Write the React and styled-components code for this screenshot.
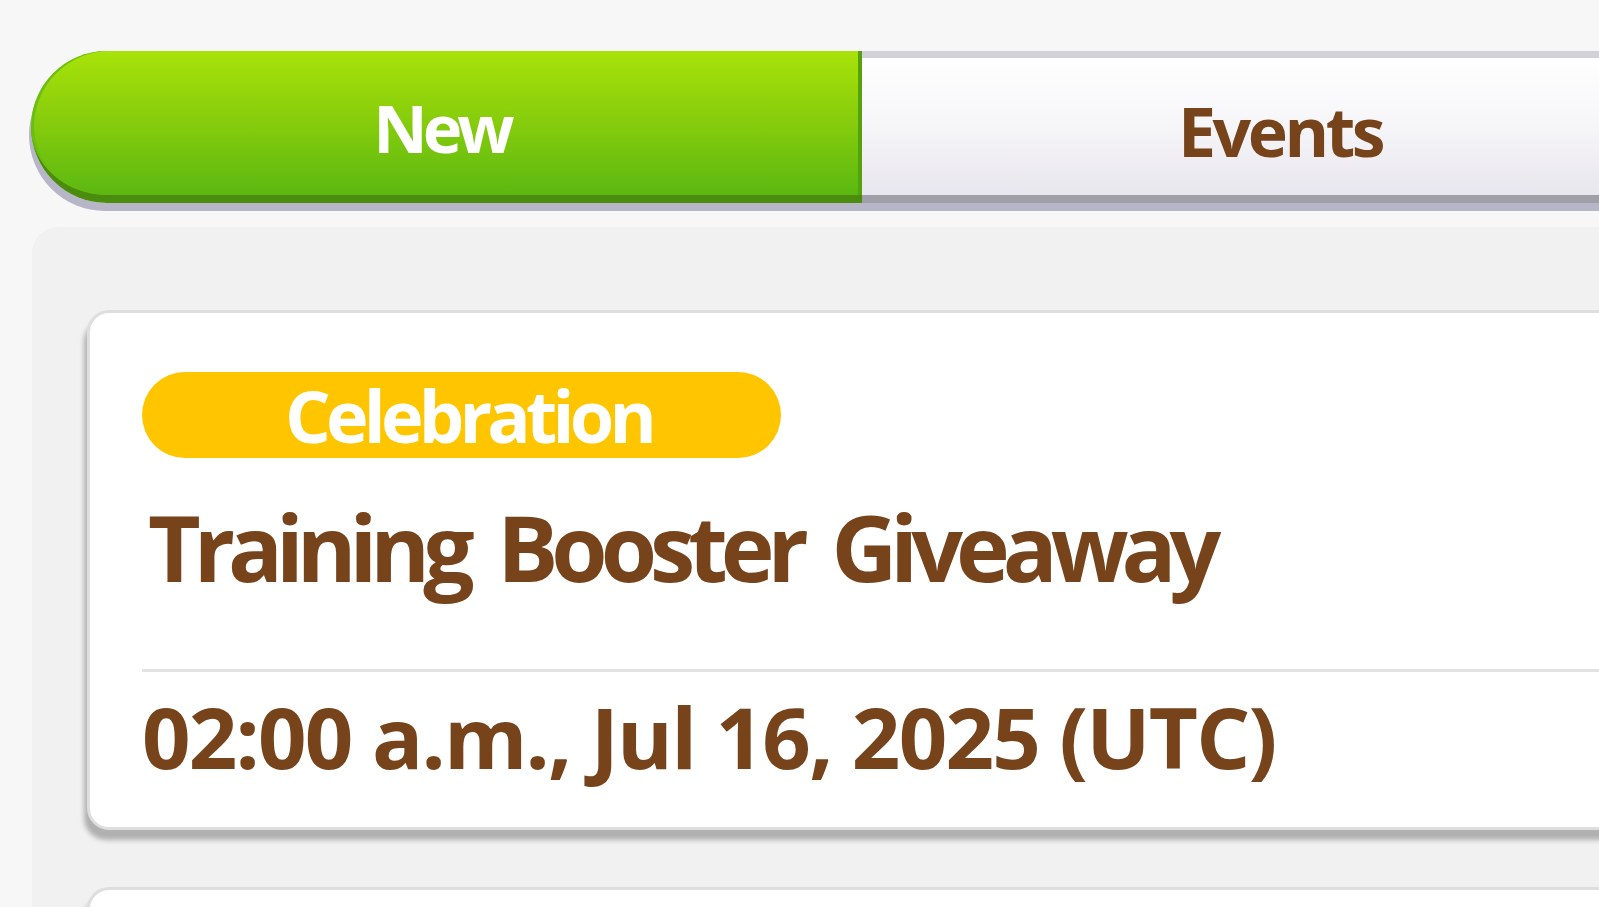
import React from "react";
import styled, { createGlobalStyle } from "styled-components";

const GlobalStyle = createGlobalStyle`
    html, body {
        margin: 0;
        padding: 0;
        background: #f7f7f7;
        overflow: hidden;
    }
    * {
        box-sizing: border-box;
    }
`;

const Page = styled.div`
    width: 1599px;
    height: 907px;
    overflow: hidden;
    padding: 51px 0 0 31px;
    font-family: "Open Sans", "Noto Sans", sans-serif;
    font-weight: 700;
    color: #76431a;
`;

const TabBar = styled.div`
    display: flex;
    width: 1677px;
    height: 152px;
    border-radius: 76px;
    box-shadow: -2px 8px 0 #b7b5c8;
`;

const Tab = styled.div`
    flex: 0 0 ${(p) => (p.$active ? "831px" : "846px")};
    display: flex;
    align-items: center;
    justify-content: center;
    padding: 8px 10px 0 0;
    font-size: ${(p) => (p.$active ? "67px" : "68px")};
    letter-spacing: ${(p) => (p.$active ? "-5px" : "-3.5px")};
    line-height: 1;
    color: ${(p) => (p.$active ? "#ffffff" : "#76431a")};
    background: ${(p) =>
        p.$active
            ? "linear-gradient(#a8e209, #86cc0c 50%, #5bb811)"
            : "linear-gradient(#ffffff, #f6f5f8 50%, #e8e6ee)"};
    border-top: ${(p) => (p.$active ? "none" : "7px solid #d2d1d8")};
    border-bottom: 8px solid ${(p) => (p.$active ? "#4b8b0d" : "#a09fa8")};
    border-radius: ${(p) => (p.$active ? "76px 0 0 76px" : "0 76px 76px 0")};
    box-shadow: ${(p) =>
        p.$active
            ? "inset 3px 0 0 #6bbd12, inset -4px 0 0 #55a20e"
            : "none"};
`;

const Panel = styled.div`
    margin: 24px 0 0 1px;
    width: 1640px;
    height: 1000px;
    padding: 83px 0 0 55px;
    background: #f1f1f1;
    border-radius: 26px;
    display: flex;
    flex-direction: column;
    gap: 57px;
`;

const Card = styled.div`
    width: 1560px;
    min-height: 520px;
    padding: 59px 0 47px 52px;
    background: #ffffff;
    border: 3px solid #dedede;
    border-radius: 22px;
    box-shadow: -3px 10px 5px rgba(0, 0, 0, 0.27);
`;

const Badge = styled.div`
    display: flex;
    justify-content: center;
    width: 639px;
    height: 86px;
    padding-left: 14px;
    border-radius: 43px;
    background: #ffc600;
    color: #ffffff;
    font-size: 72px;
    letter-spacing: -4.8px;
    line-height: 86px;
`;

const Title = styled.div`
    margin: 44px 0 0 6px;
    font-size: 91px;
    letter-spacing: -7px;
    word-spacing: 13px;
    line-height: 1;
    white-space: nowrap;
`;

const Divider = styled.div`
    height: 3px;
    margin-top: 76px;
    background: #e2e2e2;
`;

const DateText = styled.div`
    margin-top: 22px;
    font-size: 85px;
    letter-spacing: -1.8px;
    line-height: 1;
    white-space: nowrap;
`;

const news = [
    {
        tag: "Celebration",
        title: "Training Booster Giveaway",
        date: "02:00 a.m., Jul 16, 2025 (UTC)",
    },
];

const App = () => {
    return (
        <>
            <GlobalStyle />
            <Page>
                <TabBar>
                    <Tab $active>New</Tab>
                    <Tab>Events</Tab>
                </TabBar>
                <Panel>
                    {news.map((item, i) => (
                        <Card key={i}>
                            <Badge>{item.tag}</Badge>
                            <Title>{item.title}</Title>
                            <Divider />
                            <DateText>{item.date}</DateText>
                        </Card>
                    ))}
                    {/* next item, only its top edge shows */}
                    <Card />
                </Panel>
            </Page>
        </>
    );
};

export default App;
